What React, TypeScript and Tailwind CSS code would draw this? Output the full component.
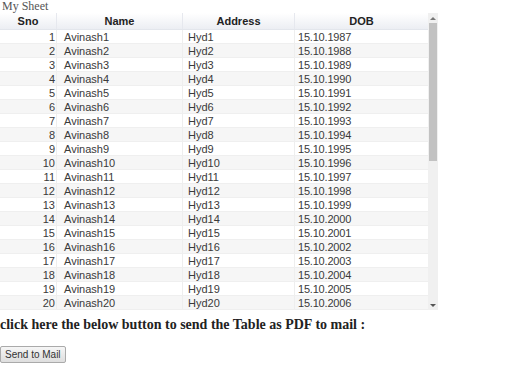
import React from "react";

const rows = Array.from({ length: 20 }, (_, i) => ({
  sno: i + 1,
  name: `Avinash${i + 1}`,
  address: `Hyd${i + 1}`,
  dob: `15.10.${1987 + i}`,
}));

export default function App() {
  return (
    <div className="w-[530px] h-[390px] bg-white overflow-hidden text-[#3a3a3a]">
      <div className="pl-[2px] h-[13px] leading-[12px] text-[12px] text-[#555] font-['Liberation_Serif',serif]">
        My Sheet
      </div>

      <div className="flex w-[438px] h-[297px] font-['Liberation_Sans',Arial,sans-serif]">
        <div className="flex-1 flex flex-col">
          <div className="flex h-[17px] bg-gradient-to-b from-white to-[#eceef3] border-b border-[#e3e6ec] text-[11px] font-bold text-[#222] leading-[16px]">
            <div className="w-[57px] text-center border-r border-[#e6e8ee]">Sno</div>
            <div className="w-[126px] text-center border-r border-[#e6e8ee]">Name</div>
            <div className="w-[112px] text-center border-r border-[#e6e8ee]">Address</div>
            <div className="flex-1 text-center">DOB</div>
          </div>
          {rows.map((r, i) => (
            <div
              key={r.sno}
              className={`flex h-[14px] text-[11px] leading-[14px] border-b border-[#efefef] ${
                i % 2 === 1 ? "bg-[#f6f6f6]" : "bg-white"
              }`}
            >
              <div className="w-[57px] text-right pr-[1px] border-r border-[#eeeeee]">{r.sno}</div>
              <div className="w-[126px] pl-[7px] border-r border-[#eeeeee]">{r.name}</div>
              <div className="w-[112px] pl-[5px] border-r border-[#eeeeee]">{r.address}</div>
              <div className="flex-1 pl-[3px] tracking-[-0.2px]">{r.dob}</div>
            </div>
          ))}
        </div>
        <div className="w-[10px] bg-[#f0f0f0] flex flex-col items-center">
          <div className="h-[10px] flex items-center justify-center">
            <div className="w-0 h-0 border-l-[3px] border-r-[3px] border-b-[3px] border-l-transparent border-r-transparent border-b-[#777]" />
          </div>
          <div className="w-[8px] h-[138px] bg-[#c2c2c2]" />
          <div className="flex-1" />
          <div className="h-[10px] flex items-center justify-center">
            <div className="w-0 h-0 border-l-[3px] border-r-[3px] border-t-[3px] border-l-transparent border-r-transparent border-t-[#555]" />
          </div>
        </div>
      </div>

      <div className="mt-[6px] text-[14px] leading-[18px] font-bold text-[#222] font-['Liberation_Serif',serif] whitespace-nowrap">
        click here the below button to send the Table as PDF to mail :
      </div>

      <div className="mt-[6px]">
        <button className="h-[17px] px-[4px] text-[10px] leading-[15px] text-[#333] font-['Liberation_Sans',Arial,sans-serif] border border-[#aaa] rounded-[2px] bg-gradient-to-b from-[#f6f6f6] to-[#dedede]">
          Send to Mail
        </button>
      </div>
    </div>
  );
}
